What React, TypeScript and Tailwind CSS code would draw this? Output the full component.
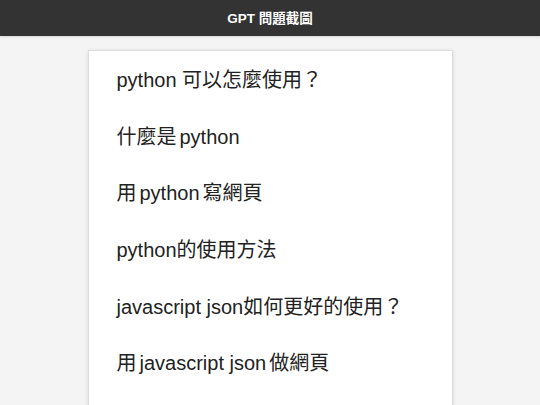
import React from 'react';

const questions: string[][] = [
  ['python 可以怎麼使用？'],
  ['什麼是', 'python'],
  ['用', 'python', '寫網頁'],
  ['python的使用方法'],
  ['javascript json如何更好的使用？'],
  ['用', 'javascript json', '做網頁'],
];

const App: React.FC = () => {
  return (
    <div
      className="min-h-screen h-[405px] overflow-hidden bg-[#f4f4f4]"
      style={{ fontFamily: '"Liberation Sans", "Noto Sans CJK TC", sans-serif' }}
    >
      {/* Header */}
      <header className="relative z-10 h-9 bg-[#333333] flex items-center justify-center pt-[3px] shadow-[0_1px_2px_rgba(0,0,0,0.12)]">
        <h1 className="text-white text-[13.5px] font-bold">GPT 問題截圖</h1>
      </header>

      {/* Question list */}
      <div className="flex justify-center pt-[14px]">
        <ul className="w-[365px] bg-white border border-[#dcdcdc] pt-[1px] pb-[40px] shadow-[0_1px_4px_rgba(0,0,0,0.12)]">
          {questions.map((parts, i) => (
            <li
              key={i}
              className="h-[56.6px] flex items-center pl-[28px] text-[20px] text-[#222222]"
            >
              {parts.map((p, j) => (
                <React.Fragment key={j}>
                  {j > 0 && <span className="inline-block w-[3px]" />}
                  {p}
                </React.Fragment>
              ))}
            </li>
          ))}
        </ul>
      </div>
    </div>
  );
};

export default App;
